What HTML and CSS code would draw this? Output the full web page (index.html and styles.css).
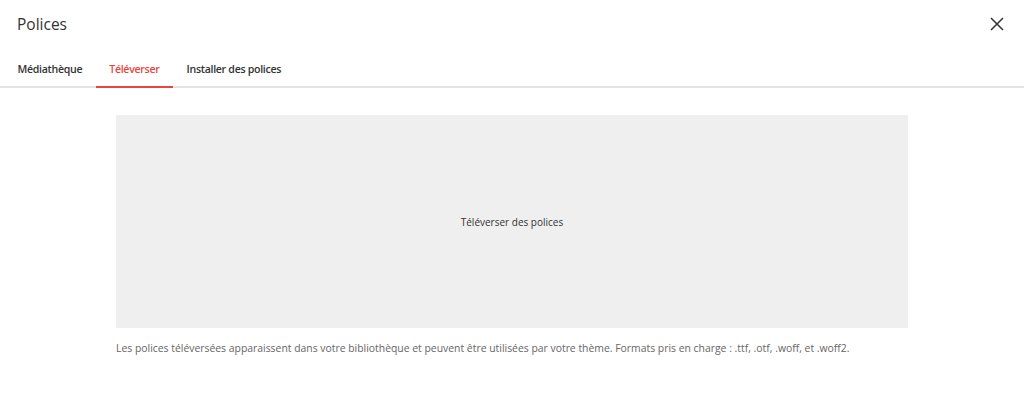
FILE: index.html
```html
<!DOCTYPE html>
<html lang="fr">
<head>
  <meta charset="UTF-8">
  <meta name="viewport" content="width=device-width, initial-scale=1.0">
  <title>Polices</title>
  <link rel="stylesheet" href="styles.css">
</head>
<body>
  <div class="modal">
    <header class="modal-header">
      <h1>Polices</h1>
      <button class="close" aria-label="Fermer">
        <svg width="14" height="14" viewBox="0 0 14 14"><path d="M1 1L13 13M13 1L1 13" stroke="#333" stroke-width="1.5" fill="none"/></svg>
      </button>
    </header>

    <nav class="tabs">
      <a href="#" class="tab">Médiathèque</a>
      <a href="#" class="tab active">Téléverser</a>
      <a href="#" class="tab">Installer des polices</a>
    </nav>

    <section class="content">
      <div class="dropzone">Téléverser des polices</div>
      <p class="hint">Les polices téléversées apparaissent dans votre bibliothèque et peuvent être utilisées par votre thème. Formats pris en charge : .ttf, .otf, .woff, et .woff2.</p>
    </section>
  </div>
</body>
</html>
```

FILE: styles.css
```css
:root {
  --text: #333;
  --muted: #666;
  --accent: #e8453c;
  --border: #e3e3e3;
  --zone: #efefef;
}

* {
  box-sizing: border-box;
}

body {
  margin: 0;
  font-family: 'Open Sans', 'Noto Sans', Arial, sans-serif;
  color: var(--text);
  background: #fff;
}

.modal-header {
  display: flex;
  justify-content: space-between;
  align-items: center;
  height: 48px;
  padding: 0 20px 0 17px;
}

.modal-header h1 {
  margin: 0;
  font-size: 15.5px;
  font-weight: 500;
}

.close {
  background: none;
  border: none;
  padding: 0;
  cursor: pointer;
  display: flex;
}

.tabs {
  display: flex;
  padding: 0 0 0 4px;
  margin-top: 5px;
  border-bottom: 2px solid var(--border);
}

.tab {
  display: block;
  padding: 9px 13.5px 10px;
  font-size: 10.6px;
  font-weight: 600;
  letter-spacing: -0.3px;
  color: var(--text);
  text-decoration: none;
  border-bottom: 2px solid transparent;
  margin-bottom: -2px;
}

.tab.active {
  color: var(--accent);
  border-bottom-color: var(--accent);
}

.content {
  max-width: 792px;
  margin: 27px auto 0;
}

.dropzone {
  height: 213px;
  background: var(--zone);
  display: flex;
  align-items: center;
  justify-content: center;
  font-size: 10px;
  color: var(--text);
}

.hint {
  margin: 13px 0 0;
  font-size: 10.4px;
  color: var(--muted);
}
```
